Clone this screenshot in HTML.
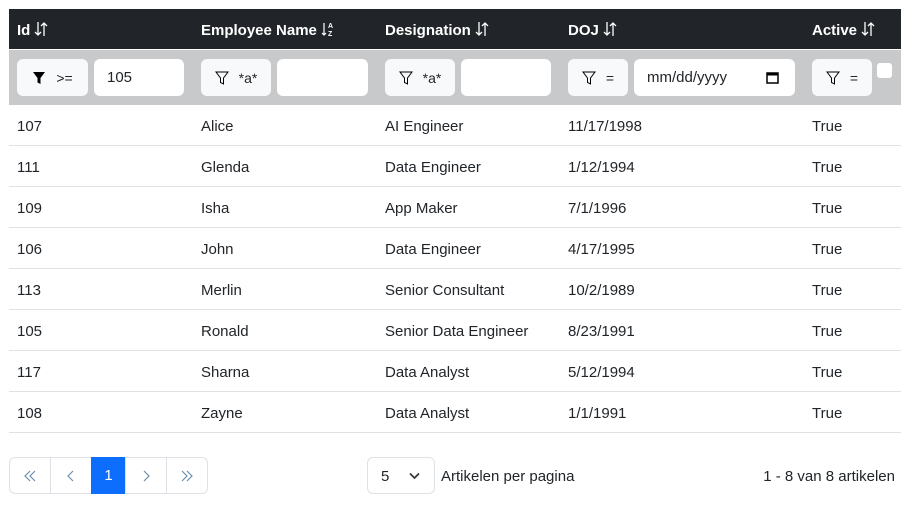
<!DOCTYPE html>
<html><head><style>
body{margin:0;background:#fff;font-family:"Liberation Sans",sans-serif;font-size:15px;color:#212529;width:912px;height:509px;overflow:hidden;position:relative}
.hdr{position:absolute;left:9px;top:9px;width:892px;height:40px;background:#212529;color:#fff;font-weight:bold}
.hdr>span{position:absolute;top:12px;white-space:nowrap}
.hdr svg{vertical-align:-2px;margin-left:4px}
.flt{position:absolute;left:9px;top:49px;width:892px;height:56px;background:#c8c9ca;border-top:1px solid #fff;box-sizing:border-box}
.b{position:absolute;top:9px;height:37px;background:#f8f9fa;border-radius:6px;box-sizing:border-box;font-size:14px;display:flex;align-items:center;justify-content:center;gap:10px}
.i{position:absolute;top:9px;height:37px;background:#fff;border-radius:6px;box-sizing:border-box;padding-left:13px;line-height:37px;font-size:15px}
.row{position:absolute;left:9px;width:892px;height:41px;border-bottom:1px solid #dee2e6;box-sizing:border-box}
.row span{position:absolute;top:13px}
.pg{position:absolute;top:457px;height:37px;border:1px solid #dee2e6;box-sizing:border-box;display:flex;align-items:center;justify-content:center;color:#6c8fb0;font-size:15px}
</style></head><body>
<svg width="0" height="0" style="position:absolute"><defs><g id="s" fill="none" stroke="#fff" stroke-width="1.3"><path d="M4 1v13M1 11l3 3 3-3M10 15V2M7 5l3-3 3 3"/></g></defs></svg>
<div class="hdr">
<span style="left:8px">Id<svg width="14" height="16"><use href="#s"/></svg></span>
<span style="left:192px">Employee Name<svg width="14" height="16" viewBox="0 0 14 16"><path d="M3 2v12M1 12l2 2 2-2" fill="none" stroke="#fff" stroke-width="1.2"/><text x="7" y="7" font-size="7" fill="#fff" font-family="Liberation Sans">A</text><text x="7" y="15" font-size="7" fill="#fff" font-family="Liberation Sans">Z</text></svg></span>
<span style="left:376px">Designation<svg width="14" height="16"><use href="#s"/></svg></span>
<span style="left:559px">DOJ<svg width="14" height="16"><use href="#s"/></svg></span>
<span style="left:803px">Active<svg width="14" height="16"><use href="#s"/></svg></span>
</div>
<div class="flt">
<div class="b" style="left:8px;width:71px"><svg width="14" height="14" viewBox="0 0 14 14"><path d="M1 1h12L8.5 7v6l-3-1.5V7z" fill="#000"/></svg><span>&gt;=</span></div>
<div class="i" style="left:85px;width:90px">105</div>
<div class="b" style="left:192px;width:70px"><svg width="14" height="14" viewBox="0 0 14 14"><path d="M1 1h12L8.5 7v6l-3-1.5V7z" fill="none" stroke="#000"/></svg><span>*a*</span></div>
<div class="i" style="left:268px;width:91px"></div>
<div class="b" style="left:376px;width:70px"><svg width="14" height="14" viewBox="0 0 14 14"><path d="M1 1h12L8.5 7v6l-3-1.5V7z" fill="none" stroke="#000"/></svg><span>*a*</span></div>
<div class="i" style="left:452px;width:90px"></div>
<div class="b" style="left:559px;width:60px"><svg width="14" height="14" viewBox="0 0 14 14"><path d="M1 1h12L8.5 7v6l-3-1.5V7z" fill="none" stroke="#000"/></svg><span>=</span></div>
<div class="i" style="left:625px;width:161px">mm/dd/yyyy<svg style="position:absolute;left:132px;top:12px" width="13" height="13" viewBox="0 0 13 13"><rect x="1" y="2" width="11" height="10" fill="none" stroke="#000" stroke-width="1.5"/><rect x="1" y="2" width="11" height="2.5" fill="#000"/></svg></div>
<div class="b" style="left:803px;width:60px"><svg width="14" height="14" viewBox="0 0 14 14"><path d="M1 1h12L8.5 7v6l-3-1.5V7z" fill="none" stroke="#000"/></svg><span>=</span></div>
<div style="position:absolute;left:868px;top:13px;width:15px;height:15px;background:#fff;border-radius:3px"></div>
</div>
<div class="row" style="top:105px"><span style="left:8px">107</span><span style="left:192px">Alice</span><span style="left:376px">AI Engineer</span><span style="left:559px">11/17/1998</span><span style="left:803px">True</span></div>
<div class="row" style="top:146px"><span style="left:8px">111</span><span style="left:192px">Glenda</span><span style="left:376px">Data Engineer</span><span style="left:559px">1/12/1994</span><span style="left:803px">True</span></div>
<div class="row" style="top:187px"><span style="left:8px">109</span><span style="left:192px">Isha</span><span style="left:376px">App Maker</span><span style="left:559px">7/1/1996</span><span style="left:803px">True</span></div>
<div class="row" style="top:228px"><span style="left:8px">106</span><span style="left:192px">John</span><span style="left:376px">Data Engineer</span><span style="left:559px">4/17/1995</span><span style="left:803px">True</span></div>
<div class="row" style="top:269px"><span style="left:8px">113</span><span style="left:192px">Merlin</span><span style="left:376px">Senior Consultant</span><span style="left:559px">10/2/1989</span><span style="left:803px">True</span></div>
<div class="row" style="top:310px"><span style="left:8px">105</span><span style="left:192px">Ronald</span><span style="left:376px">Senior Data Engineer</span><span style="left:559px">8/23/1991</span><span style="left:803px">True</span></div>
<div class="row" style="top:351px"><span style="left:8px">117</span><span style="left:192px">Sharna</span><span style="left:376px">Data Analyst</span><span style="left:559px">5/12/1994</span><span style="left:803px">True</span></div>
<div class="row" style="top:392px"><span style="left:8px">108</span><span style="left:192px">Zayne</span><span style="left:376px">Data Analyst</span><span style="left:559px">1/1/1991</span><span style="left:803px">True</span></div>
<div class="pg" style="left:9px;width:42px;border-radius:6px 0 0 6px"><svg width="14" height="14" viewBox="0 0 14 14" fill="none" stroke="#6c8fb0" stroke-width="1.2"><path d="M7 2L2 7l5 5M12 2L7 7l5 5"/></svg></div>
<div class="pg" style="left:50px;width:42px"><svg width="14" height="14" viewBox="0 0 14 14" fill="none" stroke="#6c8fb0" stroke-width="1.2"><path d="M9 2L4 7l5 5"/></svg></div>
<div class="pg" style="left:91px;width:35px;background:#0d6efd;border-color:#0d6efd;color:#fff">1</div>
<div class="pg" style="left:125px;width:42px"><svg width="14" height="14" viewBox="0 0 14 14" fill="none" stroke="#6c8fb0" stroke-width="1.2"><path d="M5 2l5 5-5 5"/></svg></div>
<div class="pg" style="left:166px;width:42px;border-radius:0 6px 6px 0"><svg width="14" height="14" viewBox="0 0 14 14" fill="none" stroke="#6c8fb0" stroke-width="1.2"><path d="M2 2l5 5-5 5M7 2l5 5-5 5"/></svg></div>
<div style="position:absolute;left:367px;top:457px;width:68px;height:37px;border:1px solid #dee2e6;border-radius:6px;box-sizing:border-box;padding-left:13px;line-height:37px">5<svg style="position:absolute;left:41px;top:14px" width="11" height="8" viewBox="0 0 11 8"><path d="M1 1.5l4.5 4.5 4.5-4.5" fill="none" stroke="#343a40" stroke-width="1.8"/></svg></div>
<div style="position:absolute;left:441px;top:468px">Artikelen per pagina</div>
<div style="position:absolute;right:17px;top:468px">1 - 8 van 8 artikelen</div>
</body></html>
